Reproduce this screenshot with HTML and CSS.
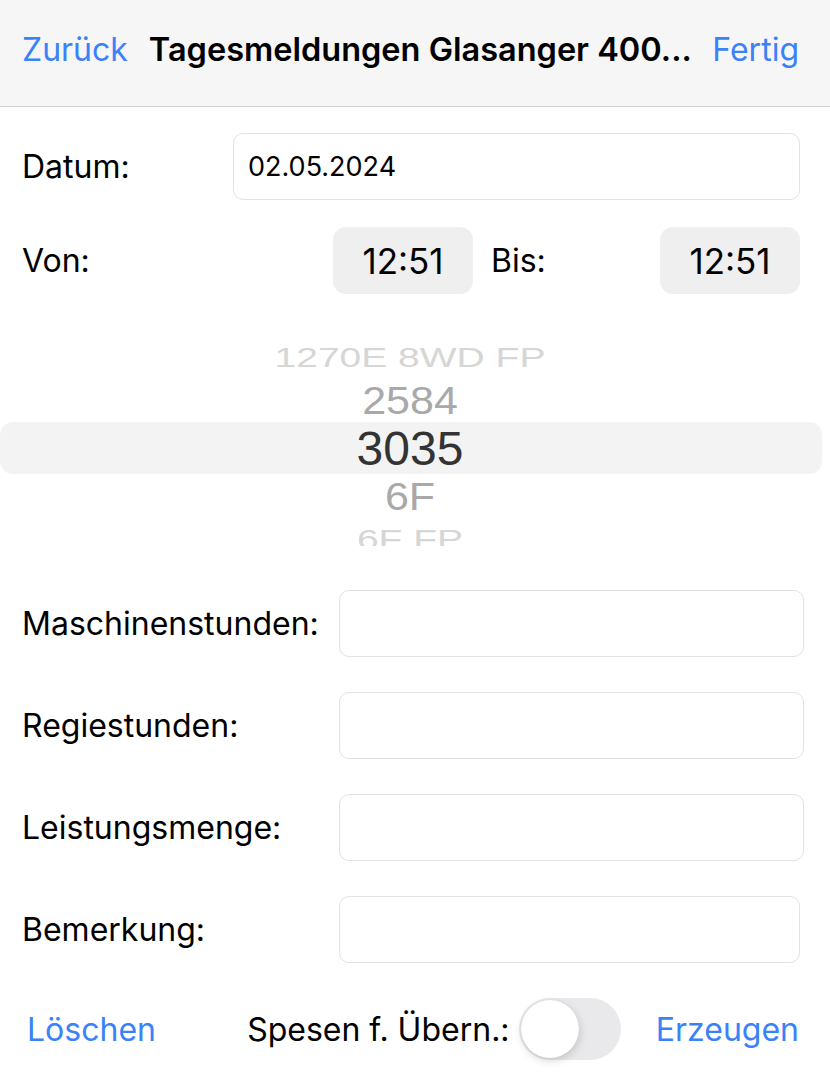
FILE: index.html
```html
<!DOCTYPE html>
<html lang="de">
<head>
    <meta charset="UTF-8">
    <meta name="viewport" content="width=device-width, initial-scale=1.0">
    <title>Tagesmeldungen</title>
    <link rel="stylesheet" href="styles.css">
</head>
<body>
    <div id="app">
        <div class="navbar">
            <a href="javascript:;" class="nav-btn">Zurück</a>
            <span class="nav-title">Tagesmeldungen Glasanger 400...</span>
            <a href="javascript:;" class="nav-btn">Fertig</a>
        </div>

        <div class="form">
            <div class="row row-date">
                <label>Datum:</label>
                <div class="field">02.05.2024</div>
            </div>
            <div class="row row-time">
                <label class="time-label">Von:</label>
                <div class="time-box">12:51</div>
                <label class="bis-label">Bis:</label>
                <div class="time-box">12:51</div>
            </div>
        </div>

        <div class="picker">
            <div class="picker-band"></div>
            <ul class="picker-list">
                <li class="far top">1270E 8WD FP</li>
                <li class="near top">2584</li>
                <li class="selected">3035</li>
                <li class="near bottom">6F</li>
                <li class="far bottom">6F FP</li>
            </ul>
        </div>

        <div class="form form-lower">
            <div class="row">
                <label>Maschinenstunden:</label>
                <div class="field field-wide"></div>
            </div>
            <div class="row">
                <label>Regiestunden:</label>
                <div class="field field-wide"></div>
            </div>
            <div class="row">
                <label>Leistungsmenge:</label>
                <div class="field field-wide"></div>
            </div>
            <div class="row">
                <label>Bemerkung:</label>
                <div class="field field-note"></div>
            </div>
        </div>

        <div class="footer">
            <a href="javascript:;" class="nav-btn">Löschen</a>
            <div class="spesen">
                <span>Spesen f. Übern.:</span>
                <div class="toggle"><div class="knob"></div></div>
            </div>
            <a href="javascript:;" class="nav-btn">Erzeugen</a>
        </div>
    </div>
</body>
</html>
```

FILE: styles.css
```css
* {
    box-sizing: border-box;
}
body {
    margin: 0;
    background: #fff;
    font-family: Inter, "Liberation Sans", sans-serif;
    color: #000;
}
#app {
    width: 830px;
    height: 1092px;
    overflow: hidden;
}
.navbar {
    height: 107px;
    background: #f6f6f6;
    border-bottom: 1px solid #cfcfd1;
    display: flex;
    align-items: center;
    padding: 0 31px 8px 22px;
}
.nav-btn {
    color: #3a82f7;
    text-decoration: none;
    font-size: 32px;
}
.nav-title {
    flex: 1;
    font-size: 32.5px;
    font-weight: 600;
    letter-spacing: 0;
    white-space: nowrap;
    padding-left: 21px;
}
.form {
    padding: 26px 30px 0 22px;
}
.row {
    display: flex;
    align-items: center;
    height: 67px;
    margin-bottom: 27px;
    font-size: 32px;
}
.row label {
    flex: 1;
}
.row-date label {
    flex: 0 0 211px;
}
.field {
    height: 67px;
    border: 1px solid #e2e2e4;
    border-radius: 10px;
    flex: 1;
    display: flex;
    align-items: center;
    padding-left: 14px;
    font-size: 27px;
}
.time-label {
    flex: 1;
}
.time-box {
    width: 140px;
    height: 67px;
    background: #efeff0;
    border-radius: 13px;
    display: flex;
    align-items: center;
    justify-content: center;
    font-size: 35px;
}
.row .bis-label {
    flex: 0 0 187px;
    padding-left: 18px;
}
.picker {
    position: relative;
    height: 269px;
    font-family: "Liberation Sans", sans-serif;
}
.picker-band {
    position: absolute;
    left: 0;
    top: 101px;
    width: 822px;
    height: 52px;
    background: #f3f3f4;
    border-radius: 13px;
}
.picker-list {
    position: relative;
    list-style: none;
    margin: 0;
    padding: 17px 0 0;
    height: 225px;
    overflow: hidden;
    text-align: center;
}
.picker-list li {
    height: 46px;
    line-height: 46px;
    font-size: 43px;
    color: #a9a9a9;
    padding-right: 10px;
    transform: scaleY(0.9);
}
.picker-list li.selected {
    height: 50px;
    line-height: 50px;
    font-size: 48px;
    color: #333;
    transform: none;
}
.picker-list li.far {
    color: #d6d6d6;
    font-size: 39px;
    transform: scaleY(0.72);
    height: 40px;
    line-height: 40px;
}
.form-lower {
    padding: 0 26px 0 22px;
}
.form-lower .row {
    margin-bottom: 35px;
}
.field-wide {
    flex: 0 0 465px;
}
.field-note {
    flex: 0 0 461px;
    margin-right: 4px;
}
.footer {
    display: flex;
    align-items: center;
    justify-content: space-between;
    padding: 0 31px 0 27px;
    margin-top: 2px;
}
.spesen {
    display: flex;
    align-items: center;
    font-size: 32px;
    gap: 9px;
    margin-left: 56px;
}
.toggle {
    width: 102px;
    height: 62px;
    border-radius: 31px;
    background: #e9e9eb;
    padding: 2px;
}
.knob {
    width: 58px;
    height: 58px;
    border-radius: 50%;
    background: #fff;
    box-shadow: 1px 3px 8px rgba(0, 0, 0, 0.15), 0 0 1px rgba(0, 0, 0, 0.12);
}
```
